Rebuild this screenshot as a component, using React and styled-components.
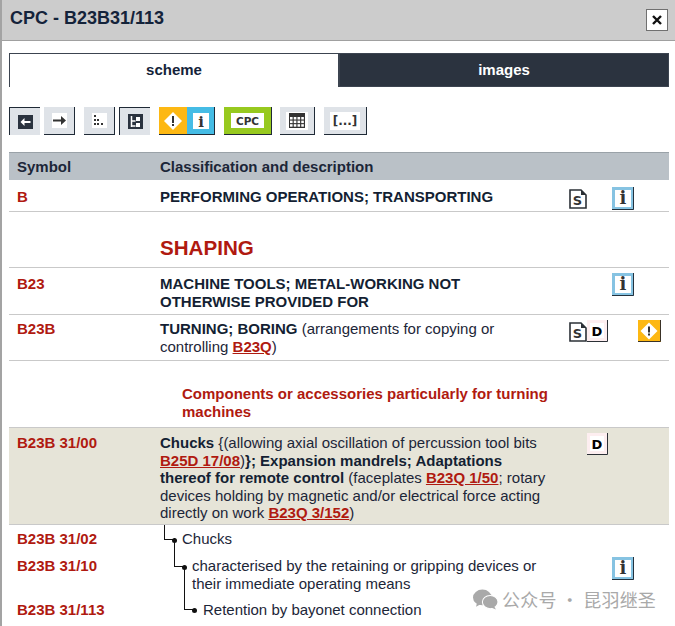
import React from 'react';
import styled, { createGlobalStyle } from 'styled-components';

const GlobalStyle = createGlobalStyle`
    html, body {
        margin: 0;
        padding: 0;
        background: #fff;
    }
    body {
        font-family: "Liberation Sans", Arial, sans-serif;
        font-size: 15px;
        color: #1c2638;
    }
`;

const RED = '#b01a10';
const DARK = '#1f2a36';

const Dialog = styled.div`
    position: relative;
    width: 675px;
    height: 626px;
    overflow: hidden;
    box-sizing: border-box;
    border-left: 2px solid #a3a3a3;
    background: #fff;
`;

const TitleBar = styled.div`
    height: 40px;
    border-bottom: 1px solid #a0a0a0;
    background: #cccccc;
    display: flex;
    align-items: center;
    justify-content: space-between;
    padding: 0 7px 0 8px;
`;

const Title = styled.div`
    font-size: 18px;
    font-weight: bold;
    color: #14233a;
    margin-top: -3px;
`;

const CloseButton = styled.button`
    width: 22px;
    height: 22px;
    padding: 0;
    box-sizing: border-box;
    border: 1px solid #707070;
    background: #fff;
    display: flex;
    align-items: center;
    justify-content: center;
`;

const Content = styled.div`
    padding: 12px 6px 0 7px;
`;

const Tabs = styled.div`
    display: grid;
    grid-template-columns: 330px 330px;
    height: 34px;
`;

const Tab = styled.div`
    display: flex;
    align-items: center;
    justify-content: center;
    box-sizing: border-box;
    font-size: 15px;
    font-weight: bold;
    padding-bottom: ${(p) => (p.$active ? 2 : 1)}px;
    color: ${(p) => (p.$active ? '#14233a' : '#fff')};
    background: ${(p) => (p.$active ? '#fff' : '#2b333f')};
    border: 1px solid #3c4450;
    border-bottom: ${(p) => (p.$active ? 'none' : '1px solid #3c4450')};
`;

const Toolbar = styled.div`
    display: flex;
    margin-top: 20px;
    height: 28px;
`;

const ToolButton = styled.div`
    box-sizing: border-box;
    width: ${(p) => p.$w || 31}px;
    margin-left: ${(p) => p.$gap || 0}px;
    height: 28px;
    display: flex;
    align-items: center;
    justify-content: center;
    background: #dfe3e8;
    border-style: solid;
    border-color: ${DARK};
    border-width: ${(p) => (p.$active ? '1px 0 0 1px' : '0 1px 1px 0')};
`;

const ToolFace = styled.div`
    width: ${(p) => p.$w || 15}px;
    height: ${(p) => p.$h || 15}px;
    background: #fff;
    display: flex;
    align-items: center;
    justify-content: center;
    font-size: ${(p) => p.$size || 13}px;
    font-weight: bold;
    font-family: "DejaVu Sans", sans-serif;
    color: #333;
`;

const SplitButton = styled.div`
    display: grid;
    grid-template-columns: 28px 27px;
    margin-left: 9px;
    height: 28px;
    box-sizing: border-box;
    border-right: 1px solid ${DARK};
    border-bottom: 1px solid ${DARK};
`;

const ColorCell = styled.div`
    display: flex;
    align-items: center;
    justify-content: center;
    background: ${(p) => p.$bg};
`;

const CpcButton = styled.div`
    margin-left: 9px;
    width: 48px;
    height: 28px;
    box-sizing: border-box;
    background: #97c91f;
    border-right: 1px solid ${DARK};
    border-bottom: 1px solid ${DARK};
    display: flex;
    align-items: center;
    justify-content: center;
`;

const CpcLabel = styled.div`
    width: 33px;
    height: 15px;
    background: #fff;
    color: #333;
    font-family: "DejaVu Sans", sans-serif;
    font-size: 10.5px;
    font-weight: bold;
    display: flex;
    align-items: center;
    justify-content: center;
`;

const Table = styled.div`
    margin-top: 17px;
`;

const HeadRow = styled.div`
    display: grid;
    grid-template-columns: 143px 1fr;
    height: 28px;
    align-items: center;
    padding-left: 8px;
    box-sizing: border-box;
    border-top: 1px solid #9aa2a8;
    background: #bac1c7;
    font-weight: bold;
    font-size: 15px;
    color: #1c2638;
`;

const Row = styled.div`
    display: grid;
    grid-template-columns: 143px 410px 1fr;
    box-sizing: border-box;
    padding: ${(p) => p.$pt ?? 9}px 0 0 8px;
    height: ${(p) => p.$h}px;
    line-height: 17.5px;
    font-size: 15px;
    background: ${(p) => p.$bg || 'transparent'};
    border-bottom: ${(p) => (p.$plain ? 'none' : '1px solid #c9c9c9')};
`;

const Symbol = styled.div`
    color: ${RED};
    font-weight: bold;
    font-size: 15px;
`;

const Description = styled.div`
    position: relative;
    padding-right: 20px;
    padding-left: ${(p) => p.$indent || 0}px;
`;

const Strong = styled.b`
    color: #141f33;
`;

const RefLink = styled.a`
    color: ${RED};
    font-weight: bold;
    text-decoration: underline;
`;

const Shaping = styled.div`
    color: ${RED};
    font-size: 20.6px;
    font-weight: bold;
    line-height: 23px;
`;

const SubHeading = styled.div`
    color: ${RED};
    font-weight: bold;
    margin-left: 22px;
`;

const Icons = styled.div`
    display: grid;
    grid-template-columns: 18px 25px 26px 23px;
    align-items: start;
    margin-left: -1px;
    margin-top: ${(p) => p.$mt || 0}px;
    height: 22px;
`;

const SheetSlot = styled.span`
    display: block;
    margin-top: 2px;
`;

/* tree connector, hangs over the row above */
const Elbow = styled.span`
    position: absolute;
    left: ${(p) => p.$left}px;
    top: ${(p) => p.$top}px;
    width: 10px;
    height: ${(p) => p.$h}px;
    box-sizing: border-box;
    border-left: 1.5px solid #111;
    border-bottom: 1.5px solid #111;
    &::after {
        content: '';
        position: absolute;
        right: -3px;
        bottom: -3.5px;
        width: 5px;
        height: 5px;
        border-radius: 50%;
        background: #111;
    }
`;

const Watermark = styled.div`
    position: absolute;
    left: 471px;
    top: 586px;
    display: flex;
    align-items: center;
    gap: 4px;
    color: #a9a9a9;
    font-family: "Noto Sans CJK SC", sans-serif;
    font-size: 18px;
    letter-spacing: 0.2px;
    white-space: nowrap;
`;

const SheetIcon = () => (
    <SheetSlot>
        <svg width="18" height="20" viewBox="0 0 18 20" display="block">
            <path d="M1 1h11l5 5v13H1z" fill="#fff" stroke="#2b3036" strokeWidth="1.6" />
            <path d="M12 1v5h5" fill="#2b3036" />
            <text x="8.5" y="16" textAnchor="middle" fontFamily="DejaVu Sans" fontWeight="bold" fontSize="13" fill="#333">S</text>
        </svg>
    </SheetSlot>
);

const DefIcon = () => (
    <svg width="21" height="22" viewBox="0 0 21 22" display="block">
        <rect width="21" height="22" fill="#fdeef0" />
        <path d="M20.5 0v21.5H0" fill="none" stroke="#2b3036" />
        <rect x="3" y="3" width="14" height="15" fill="#fff" />
        <text x="10" y="16" textAnchor="middle" fontFamily="DejaVu Sans" fontWeight="bold" fontSize="13" fill="#000">D</text>
    </svg>
);

const InfoGlyph = ({ size = 18, y = 17 }) => (
    <text x="50%" y={y} textAnchor="middle" fontFamily="DejaVu Serif" fontWeight="bold" fontSize={size} fill="#333">i</text>
);

const InfoIcon = () => (
    <svg width="22" height="23" viewBox="0 0 22 23" display="block">
        <rect width="22" height="23" fill="#86c3e2" />
        <path d="M21.5 0v22.5H0" fill="none" stroke="#24313d" />
        <rect x="3" y="3" width="16" height="17" fill="#fff" />
        <InfoGlyph />
    </svg>
);

const WarnIcon = () => (
    <svg width="23" height="22" viewBox="0 0 23 22" display="block">
        <rect width="23" height="22" fill="#fdb813" />
        <path d="M22.5 0v21.5H0" fill="none" stroke="#3a3226" />
        <path d="M11 2.500l8.500 8.500-8.500 8.500-8.500-8.500z" fill="#fff" />
        <rect x="10" y="6.500" width="2" height="6" fill="#333" />
        <rect x="10" y="13.500" width="2" height="2" fill="#333" />
    </svg>
);

const CloseIcon = () => (
    <svg width="10" height="10" viewBox="0 0 10 10">
        <path d="M1 1l8 8M9 1l-8 8" stroke="#111" strokeWidth="2.4" />
    </svg>
);

const GlyphBack = () => (
    <svg width="15" height="14" viewBox="0 0 15 14">
        <rect width="15" height="14" fill="#2b333f" />
        <path d="M2.500 7l4-4v3h6v2h-6v3z" fill="#fff" />
    </svg>
);

const GlyphForward = () => (
    <svg width="13" height="11" viewBox="0 0 13 11">
        <path d="M0 4.500h8V1l5 4.500L8 10V6.500H0z" fill="#333" />
    </svg>
);

const GlyphDots = () => (
    <svg width="11" height="11" viewBox="0 0 11 11" fill="#333">
        <rect x="0" y="0" width="2" height="2" />
        <rect x="0" y="4" width="2" height="2" />
        <rect x="3" y="4" width="2" height="2" />
        <rect x="0" y="8" width="2" height="2" />
        <rect x="3" y="8" width="2" height="2" />
        <rect x="7" y="8" width="2" height="2" />
    </svg>
);

const GlyphTree = () => (
    <svg width="15" height="15" viewBox="0 0 15 15">
        <rect width="15" height="15" fill="#2b333f" />
        <path d="M3.500 2v11M3.500 7h4M3.500 12h4" fill="none" stroke="#fff" strokeWidth="1.500" />
        <rect x="8" y="3" width="4" height="4" fill="#fff" />
        <rect x="8" y="9" width="4" height="4" fill="#fff" />
    </svg>
);

const GlyphTable = () => (
    <svg width="16" height="15" viewBox="0 0 16 15">
        <rect width="16" height="15" fill="#333" />
        {[0, 1, 2].map((r) => [0, 1, 2, 3].map((c) => (
            <rect key={`${r}${c}`} x={1 + c * 3.75} y={4 + r * 3.6} width="2.6" height="2.5" fill="#fff" />
        )))}
    </svg>
);

const Chat = () => (
    <svg width="25" height="21" viewBox="0 0 24 20" fill="#a9a9a9">
        <ellipse cx="9" cy="8" rx="9" ry="7.5" />
        <path d="M4 12l-1 5 5-3z" />
        <ellipse cx="16.5" cy="12.5" rx="7.5" ry="6.3" stroke="#fff" strokeWidth="1" />
        <path d="M20 16l2 3.500-5-2z" />
    </svg>
);

const App = () => (
    <>
        <GlobalStyle />
        <Dialog>
            <TitleBar>
                <Title>CPC - B23B31/113</Title>
                <CloseButton><CloseIcon /></CloseButton>
            </TitleBar>
            <Content>
                <Tabs>
                    <Tab $active>scheme</Tab>
                    <Tab>images</Tab>
                </Tabs>
                <Toolbar>
                    <ToolButton $active><GlyphBack /></ToolButton>
                    <ToolButton $gap={4}><ToolFace><GlyphForward /></ToolFace></ToolButton>
                    <ToolButton $gap={9}><ToolFace><GlyphDots /></ToolFace></ToolButton>
                    <ToolButton $gap={4} $active><GlyphTree /></ToolButton>
                    <SplitButton>
                        <ColorCell $bg="#fdb813">
                            <svg width="22" height="22" viewBox="0 0 22 22">
                                <path d="M11 2l9 9-9 9-9-9z" fill="#fff" />
                                <rect x="10" y="6" width="2" height="7" fill="#333" />
                                <rect x="10" y="14" width="2" height="2" fill="#333" />
                            </svg>
                        </ColorCell>
                        <ColorCell $bg="#45bce5">
                            <ToolFace $w={16} $h={16}>
                                <svg width="16" height="16" viewBox="0 0 16 16"><InfoGlyph size={15} y={13.500} /></svg>
                            </ToolFace>
                        </ColorCell>
                    </SplitButton>
                    <CpcButton><CpcLabel>CPC</CpcLabel></CpcButton>
                    <ToolButton $gap={8} $w={35}><ToolFace $w={22} $h={18}><GlyphTable /></ToolFace></ToolButton>
                    <ToolButton $gap={9} $w={43}><ToolFace $w={30} $h={18} $size={12}>[...]</ToolFace></ToolButton>
                </Toolbar>
                <Table>
                    <HeadRow>
                        <div>Symbol</div>
                        <div>Classification and description</div>
                    </HeadRow>
                    <Row $h={32} $pt={8}>
                        <Symbol>B</Symbol>
                        <Description><Strong>PERFORMING OPERATIONS; TRANSPORTING</Strong></Description>
                        <Icons $mt={-1}>
                            <SheetIcon />
                            <span />
                            <InfoIcon />
                        </Icons>
                    </Row>
                    <Row $h={56} $pt={24}>
                        <span />
                        <Description><Shaping>SHAPING</Shaping></Description>
                    </Row>
                    <Row $h={47} $pt={7}>
                        <Symbol>B23</Symbol>
                        <Description><Strong>MACHINE TOOLS; METAL-WORKING NOT OTHERWISE PROVIDED FOR</Strong></Description>
                        <Icons $mt={-2}>
                            <span /><span />
                            <InfoIcon />
                        </Icons>
                    </Row>
                    <Row $h={46} $pt={5}>
                        <Symbol>B23B</Symbol>
                        <Description>
                            <Strong>TURNING; BORING</Strong> (arrangements for copying or controlling <RefLink>B23Q</RefLink>)
                        </Description>
                        <Icons>
                            <SheetIcon />
                            <DefIcon />
                            <span />
                            <WarnIcon />
                        </Icons>
                    </Row>
                    <Row $h={67} $pt={24}>
                        <span />
                        <Description><SubHeading>Components or accessories particularly for turning machines</SubHeading></Description>
                    </Row>
                    <Row $h={97} $pt={6} $bg="#e6e4d8">
                        <Symbol>B23B 31/00</Symbol>
                        <Description>
                            <Strong>Chucks</Strong> {'{'}(allowing axial oscillation of percussion tool bits <RefLink>B25D 17/08</RefLink>)<Strong>{'}'}; Expansion mandrels; Adaptations thereof for remote control</Strong> (faceplates <RefLink>B23Q 1/50</RefLink>; rotary devices holding by magnetic and/or electrical force acting directly on work <RefLink>B23Q 3/152</RefLink>)
                        </Description>
                        <Icons $mt={-1}>
                            <span />
                            <DefIcon />
                        </Icons>
                    </Row>
                    <Row $h={27} $pt={5} $plain>
                        <Symbol>B23B 31/02</Symbol>
                        <Description $indent={22}>
                            <Elbow $left={4} $top={-5} $h={15} />
                            Chucks
                        </Description>
                    </Row>
                    <Row $h={44} $pt={5} $plain>
                        <Symbol>B23B 31/10</Symbol>
                        <Description $indent={32}>
                            <Elbow $left={14} $top={-19} $h={29} />
                            characterised by the retaining or gripping devices or their immediate operating means
                        </Description>
                        <Icons>
                            <span /><span />
                            <InfoIcon />
                        </Icons>
                    </Row>
                    <Row $h={30} $plain $pt={5}>
                        <Symbol>B23B 31/113</Symbol>
                        <Description $indent={43}>
                            <Elbow $left={24} $top={-34} $h={43} />
                            Retention by bayonet connection
                        </Description>
                    </Row>
                </Table>
            </Content>
            <Watermark>
                <Chat />
                公众号 · 昆羽继圣
            </Watermark>
        </Dialog>
    </>
);

export default App;
